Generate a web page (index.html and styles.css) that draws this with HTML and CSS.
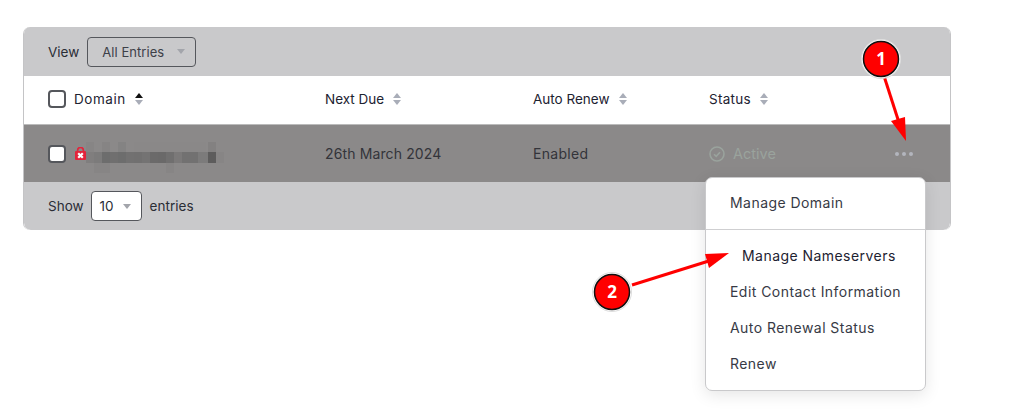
FILE: index.html
```html
<!DOCTYPE html>
<html lang="en">
<head>
<meta charset="utf-8">
<title>Domains</title>
<link rel="stylesheet" href="styles.css">
</head>
<body>
<main class="panel">
  <div class="bar bar-top">
    <span>View</span>
    <div class="select select-view"><span>All Entries</span><i class="caret"></i></div>
  </div>
  <div class="grid head">
    <div class="cell first"><i class="check"></i><span class="wide">Domain</span><svg class="sort" width="8" height="12" viewBox="0 0 8 12"><path d="M4 0 8 5H0z" fill="#111"/><path d="M4 12 8 7H0z" fill="#a9adb8"/></svg></div>
    <div class="cell"><span>Next Due</span><svg class="sort" width="8" height="12" viewBox="0 0 8 12"><path d="M4 0 8 5H0z" fill="#a9adb8"/><path d="M4 12 8 7H0z" fill="#a9adb8"/></svg></div>
    <div class="cell"><span>Auto Renew</span><svg class="sort" width="8" height="12" viewBox="0 0 8 12"><path d="M4 0 8 5H0z" fill="#a9adb8"/><path d="M4 12 8 7H0z" fill="#a9adb8"/></svg></div>
    <div class="cell"><span class="status">Status</span><svg class="sort" width="8" height="12" viewBox="0 0 8 12"><path d="M4 0 8 5H0z" fill="#a9adb8"/><path d="M4 12 8 7H0z" fill="#a9adb8"/></svg></div>
    <div class="cell"></div>
  </div>
  <div class="grid row">
    <div class="cell first">
      <i class="check"></i>
      <svg class="lock" width="11" height="13" viewBox="0 0 11 13"><path d="M2.6 5V3.4a2.9 2.9 0 0 1 5.8 0V5" fill="none" stroke="#e3243b" stroke-width="1.7"/><rect y="4" width="11" height="9" rx="1" fill="#e3243b"/><path d="m3.2 6.2 4.6 4.6m0-4.6-4.6 4.6" stroke="#fff" stroke-width="2.2"/></svg>
      <svg class="pixels" width="138" height="31" viewBox="0 0 138 31">
        <g fill="#555">
          <rect x="0" y="0" width="8" height="10" opacity=".07"/><rect x="16" y="0" width="8" height="10" opacity=".09"/><rect x="32" y="0" width="8" height="10" opacity=".11"/><rect x="48" y="0" width="72" height="10" opacity=".02"/><rect x="122" y="0" width="8" height="10" opacity=".14"/>
          <rect x="0" y="10" width="8" height="11" opacity=".2"/><rect x="8" y="10" width="8" height="11" opacity=".27"/><rect x="16" y="10" width="8" height="11" opacity=".55"/><rect x="24" y="10" width="8" height="11" opacity=".5"/><rect x="32" y="10" width="8" height="11" opacity=".55"/><rect x="40" y="10" width="8" height="11" opacity=".45"/><rect x="48" y="10" width="8" height="11" opacity=".48"/><rect x="56" y="10" width="8" height="11" opacity=".42"/><rect x="64" y="10" width="8" height="11" opacity=".58"/><rect x="72" y="10" width="8" height="11" opacity=".62"/><rect x="80" y="10" width="8" height="11" opacity=".5"/><rect x="88" y="10" width="8" height="11" opacity=".3"/><rect x="96" y="10" width="8" height="11" opacity=".45"/><rect x="104" y="10" width="8" height="11" opacity=".45"/><rect x="112" y="10" width="10" height="11" opacity=".28"/><rect x="122" y="10" width="8" height="11" opacity=".85"/><rect x="130" y="10" width="8" height="11" opacity=".06"/>
          <rect x="8" y="21" width="16" height="10" opacity=".06"/><rect x="80" y="21" width="8" height="10" opacity=".07"/>
        </g>
      </svg>
    </div>
    <div class="cell spaced">26th March 2024</div>
    <div class="cell enabled">Enabled</div>
    <div class="cell active">
      <svg width="16" height="16" viewBox="0 0 16 16" fill="none" stroke="#9aa39d" stroke-width="1.6"><circle cx="8" cy="8" r="7"/><path d="m5 8.2 2.2 2.2L11 6.2"/></svg>
      <span>Active</span>
    </div>
    <div class="cell dots"><i></i><i></i><i></i></div>
  </div>
  <div class="bar bar-bottom">
    <span>Show</span>
    <div class="select select-size"><span>10</span><i class="caret"></i></div>
    <span class="entries">entries</span>
  </div>
</main>

<nav class="menu">
  <a class="item">Manage Domain</a>
  <hr class="rule">
  <a class="item item-hover">Manage Nameservers</a>
  <a class="item">Edit Contact Information</a>
  <a class="item">Auto Renewal Status</a>
  <a class="item">Renew</a>
</nav>

<svg class="notes" width="1019" height="416" viewBox="0 0 1019 416">
  <path d="M884 76 898.5 121" stroke="#f00" stroke-width="3" fill="none"/>
  <path d="M906 141 891 121 905 117z" fill="#f00"/>
  <path d="M632 285 712 260" stroke="#f00" stroke-width="3" fill="none"/>
  <path d="M729 253 709 268 705 254z" fill="#f00"/>
  <circle class="halo" cx="881" cy="59" r="19.5"/>
  <circle class="badge" cx="881" cy="59" r="17.5"/>
  <circle class="halo" cx="612" cy="292" r="19.5"/>
  <circle class="badge" cx="612" cy="292" r="17.5"/>
  <text class="num" x="881" y="65">1</text>
  <text class="num" x="612" y="298">2</text>
</svg>
</body>
</html>
```
FILE: styles.css
```css
* { box-sizing: border-box; }
html, body { margin: 0; height: 416px; overflow: hidden; background: #fff; }
body { padding: 27px 0 0 23px; font: 13.5px/20px Inter, "Liberation Sans", sans-serif; color: #1d2231; position: relative; }
.panel { width: 928px; border-radius: 7px; overflow: hidden; border: 1px solid #c4c4c6; border-top: 0; border-bottom: 0; }
.bar { height: 48px; background: #c9c9cb; display: flex; align-items: center; padding-left: 24px; color: #2a2d36; }
.bar-top { height: 49px; gap: 8px; }
.bar-bottom { gap: 7px; border-radius: 0 0 7px 7px; }
.entries { margin-left: 1px; letter-spacing: .05px; }
.select { height: 30px; border: 1px solid #55575c; border-radius: 4px; display: flex; align-items: center; justify-content: space-between; }
.select-view { width: 109px; padding: 0 10px 0 14px; color: #3d4048; font-size: 13px; letter-spacing: .05px; }
.select-size { width: 51px; padding: 0 10px 0 8px; background: #fff; }
.caret { width: 0; height: 0; border: 4px solid transparent; border-top: 5px solid #a3a5ab; border-bottom: 0; }
.grid { display: grid; grid-template-columns: 301px 208px 176px 180px 1fr; align-items: center; }
.head { height: 49px; background: #fff; border-bottom: 1px solid #bbb; color: #1d2231; padding-bottom: 2px; }
.wide { letter-spacing: .55px; }
.status { letter-spacing: .3px; }
.row { height: 57px; background: #8b8989; color: #33343a; font-size: 14px; padding-top: 1px; }
.spaced { letter-spacing: .13px; }
.enabled { letter-spacing: .3px; }
.cell { display: flex; align-items: center; }
.first { padding-left: 24px; }
.check { width: 18px; height: 18px; border: 2px solid #55575c; border-radius: 4px; background: #fff; flex: none; margin-right: 8px; }
.sort { margin-left: 9px; }
.lock { margin: -2px 1px 0 1px; }
.pixels { margin: 6px -60px 0 -1px; }
.active { gap: 8px; color: #9aa39d; font-size: 14.5px; }
.dots { gap: 3px; padding-left: 6px; }
.dots i { width: 4px; height: 4px; border-radius: 50%; background: #b3b5bd; }
.menu { position: absolute; left: 705px; top: 177px; width: 221px; height: 214px; background: #fff; border: 1px solid #c9c9cb; border-radius: 7px; box-shadow: 0 4px 16px rgba(0,0,0,.1); padding-top: 7px; }
.item { display: block; height: 36px; line-height: 36px; padding-left: 24px; color: #373a45; font-size: 14px; letter-spacing: .45px; }
.rule { margin: 8px 0; border: 0; border-top: 1px solid #cfcfd1; }
.item-hover { padding-left: 36px; color: #1d2231; }
.notes { position: absolute; left: 0; top: 0; pointer-events: none; }
.halo { fill: #fff; stroke: #ddd; stroke-width: 1; }
.badge { fill: #f00; stroke: #111; stroke-width: 1.5; }
.num { fill: #fff; font: 700 17px "Open Sans", sans-serif; text-anchor: middle; }
```
